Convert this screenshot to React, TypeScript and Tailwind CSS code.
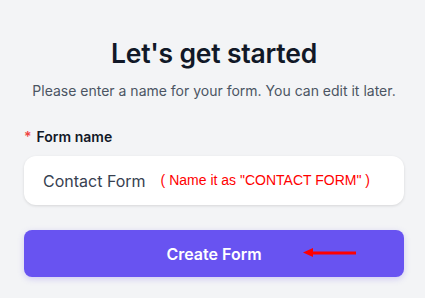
export default function App() {
  return (
    <div
      className="min-h-[298px] w-full bg-[#f3f4f6] pl-6 pr-[21px]"
      style={{ fontFamily: 'Inter, "Noto Sans", sans-serif' }}
    >
      <div className="pt-[36px] text-center">
        <h1 className="text-[26.5px] font-semibold leading-[34px] tracking-[-0.2px] text-[#111827]">
          Let's get started
        </h1>
        <p className="mt-[11px] text-[14px] leading-5 text-[#4b5563]">
          Please enter a name for your form. You can edit it later.
        </p>
      </div>

      <div className="mt-[26px]">
        <label className="flex items-center text-[14px] font-semibold leading-5 text-[#111827]">
          <span className="mr-[5px] text-[#ef4444]">*</span>
          Form name
        </label>
        <div className="mt-[9px] flex h-[49px] items-center rounded-xl bg-white px-[19px] shadow-[0_1px_3px_rgba(0,0,0,0.12)]">
          <span className="text-[16px] text-[#374151]">Contact Form</span>
          <span
            className="ml-[15px] text-[14px] text-[#ff0000]"
            style={{ fontFamily: '"Liberation Sans", Arial, sans-serif' }}
          >
            ( Name it as "CONTACT FORM" )
          </span>
        </div>
      </div>

      <button className="relative mt-[25px] flex h-[47px] w-full items-center justify-center rounded-lg bg-[#6853f1] text-[16px] font-semibold text-white shadow-[0_2px_6px_rgba(104,83,241,0.25)]">
        Create Form
        <svg
          className="absolute left-[279px] top-[18px]"
          width="54"
          height="10"
          viewBox="0 0 54 10"
        >
          <rect x="8" y="3.5" width="45" height="3" fill="#ff0000" />
          <polygon points="0,4.5 10,0 10,9" fill="#ff0000" />
        </svg>
      </button>
    </div>
  )
}
